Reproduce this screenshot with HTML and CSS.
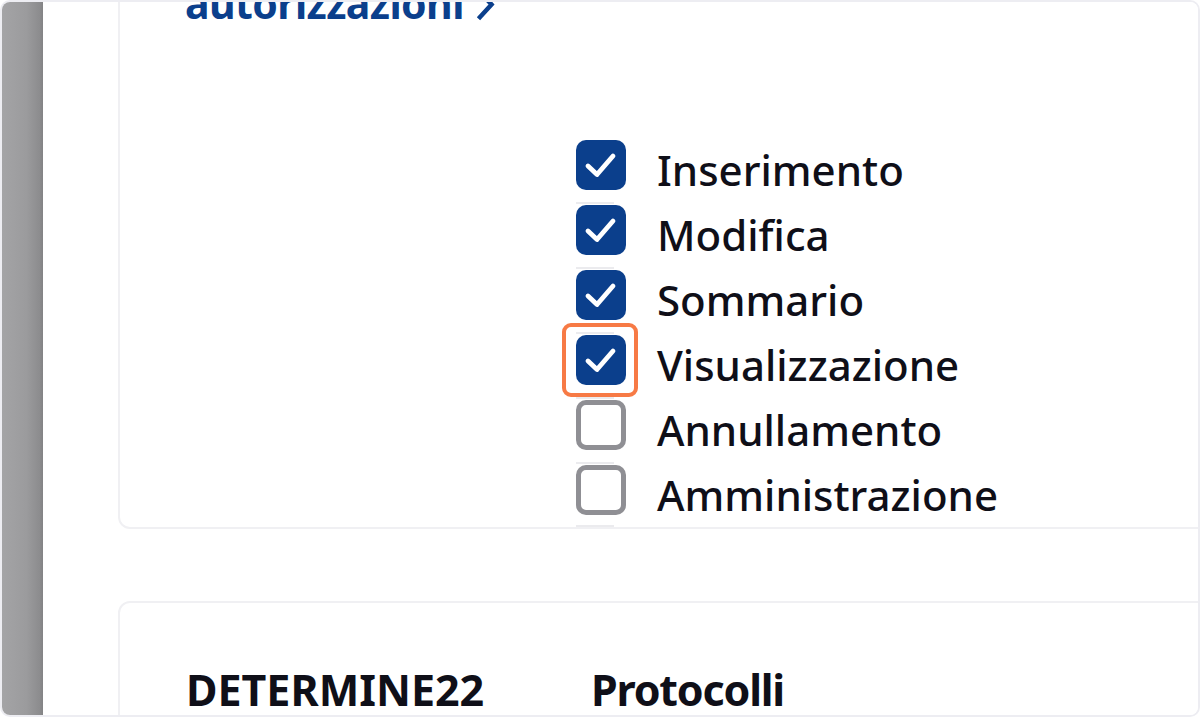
FILE: index.html
```html
<!DOCTYPE html>
<html lang="it">
<head>
<meta charset="utf-8">
<title>Autorizzazioni</title>
<link rel="stylesheet" href="styles.css">
</head>
<body>
<div class="frame">
  <div class="sidebar"></div>
  <main class="main">
    <section class="card card-perms">
      <a class="link" href="#"><span class="link-txt">autorizzazioni</span><svg class="chev" viewBox="0 0 20 34" width="20" height="34"><path d="M4 3 L15.5 15.5 L4 28" fill="none" stroke="currentColor" stroke-width="4.5" stroke-linecap="square" stroke-linejoin="miter"/></svg></a>
      <div class="list">
        <label class="opt"><span class="box on"><svg viewBox="0 0 50 50" width="50" height="50"><path d="M12 26 L21 34.5 L37 16" fill="none" stroke="#fff" stroke-width="4.8" stroke-linecap="round" stroke-linejoin="round"/></svg></span><span class="txt">Inserimento</span></label>
        <label class="opt"><span class="box on"><svg viewBox="0 0 50 50" width="50" height="50"><path d="M12 26 L21 34.5 L37 16" fill="none" stroke="#fff" stroke-width="4.8" stroke-linecap="round" stroke-linejoin="round"/></svg></span><span class="txt">Modifica</span></label>
        <label class="opt"><span class="box on"><svg viewBox="0 0 50 50" width="50" height="50"><path d="M12 26 L21 34.5 L37 16" fill="none" stroke="#fff" stroke-width="4.8" stroke-linecap="round" stroke-linejoin="round"/></svg></span><span class="txt">Sommario</span></label>
        <label class="opt"><span class="box on focus"><svg viewBox="0 0 50 50" width="50" height="50"><path d="M12 26 L21 34.5 L37 16" fill="none" stroke="#fff" stroke-width="4.8" stroke-linecap="round" stroke-linejoin="round"/></svg></span><span class="txt">Visualizzazione</span></label>
        <label class="opt"><span class="box off"></span><span class="txt">Annullamento</span></label>
        <label class="opt"><span class="box off"></span><span class="txt">Amministrazione</span></label>
        <div class="tick"></div>
      </div>
    </section>
    <section class="card card-table">
      <div class="row">
        <div class="cell">DETERMINE22</div>
        <div class="cell cell-tight">Protocolli</div>
      </div>
    </section>
  </main>
</div>
</body>
</html>
```

FILE: styles.css
```css
html, body {
  margin: 0;
  padding: 0;
  background: #ffffff;
  overflow: hidden;
}

.frame {
  width: 1200px;
  height: 717px;
  box-sizing: border-box;
  border: 2px solid #ededf2;
  border-radius: 10px;
  overflow: hidden;
  display: flex;
  background: #ffffff;
  font-family: "Noto Sans", "Open Sans", sans-serif;
  color: #0f0f18;
}

.sidebar {
  width: 41px;
  flex: none;
  background: linear-gradient(to right, #a4a4a6 0%, #9b9b9d 60%, #8c8c8e 92%, #838385 100%);
}

.main {
  flex: 1;
  min-width: 0;
  padding-left: 75px;
  display: flex;
  flex-direction: column;
}

.card {
  border: 2px solid #f0f0f3;
  border-radius: 12px;
  margin-right: -30px;
  background: #ffffff;
  flex: none;
}

.card-perms {
  margin-top: -60px;
  padding: 34px 0 0 65px;
}

.link {
  display: flex;
  align-items: flex-start;
  gap: 12px;
  height: 50px;
  color: #0b3f8c;
  text-decoration: none;
}

.link-txt {
  line-height: 50px;
  font-size: 41px;
  font-weight: 700;
  letter-spacing: -0.6px;
}

.chev {
  display: block;
  margin-top: 11px;
}

.list {
  margin-top: 112px;
  margin-left: 391px;
  display: flex;
  flex-direction: column;
  gap: 15px;
}

.opt {
  position: relative;
  display: flex;
  align-items: flex-start;
  height: 50px;
}

.opt + .opt::before {
  content: "";
  position: absolute;
  left: 0;
  top: -3px;
  width: 38px;
  height: 2px;
  background: #ebebee;
}

.box {
  position: relative;
  flex: none;
  width: 50px;
  height: 50px;
  box-sizing: border-box;
  border-radius: 10px;
}

.box svg {
  display: block;
}

.box.on {
  background: #0b3f8c;
}

.box.off {
  border: 5px solid #8f8f94;
  background: #ffffff;
}

.box.focus::after {
  content: "";
  position: absolute;
  left: -14px;
  top: -12px;
  right: -12px;
  bottom: -12px;
  border: 4.5px solid #f77a45;
  border-radius: 9px;
}

.txt {
  margin-left: 31px;
  margin-top: 5px;
  line-height: 50px;
  font-size: 42px;
  font-weight: 500;
  white-space: nowrap;
}

.tick {
  width: 38px;
  height: 2px;
  margin-top: -5px;
  background: #ebebee;
}

.card-table {
  margin-top: 72px;
  padding: 62px 0 40px 66px;
}

.row {
  display: grid;
  grid-template-columns: 405px 1fr;
}

.cell {
  line-height: 50px;
  font-size: 43px;
  font-weight: 700;
  white-space: nowrap;
}

.cell-tight {
  letter-spacing: -1.2px;
}
```
